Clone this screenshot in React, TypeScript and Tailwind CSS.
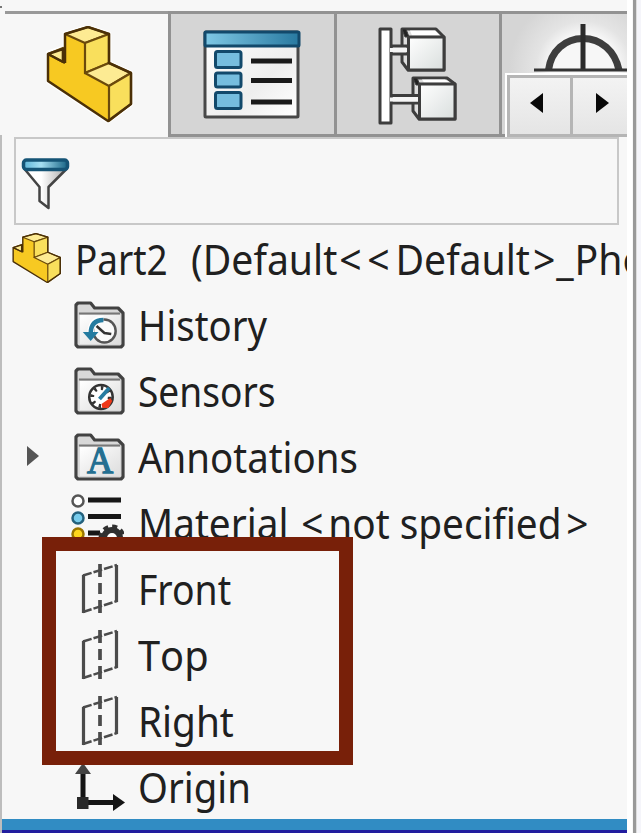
import type { ReactNode } from "react";

function PartIcon({ className }: { className: string }) {
  return (
    <svg viewBox="0 0 88 98" preserveAspectRatio="none" className={className} strokeLinejoin="round" strokeWidth="2.2" stroke="#6b4a0c">
      <path d="M2 27L15 23L19 35V8L42 1L63 8V37L85 47V78L62 95L2 55Z" fill="#f8cc24" stroke="#fff" strokeWidth="5" />
      <path d="M2 28L19 37V8L39 17V47L63 60V95L2 55Z" fill="#f7c922" stroke="none" />
      <path d="M2 28L17 22V36Z" fill="#fdeb93" />
      <path d="M19 8L42 1L63 8L39 17Z" fill="#fdeb93" />
      <path d="M39 17L63 8V37L39 47Z" fill="#f9df5c" />
      <path d="M39 47L63 37L85 47L63 60Z" fill="#fdeb93" />
      <path d="M63 60L85 47V78L63 95Z" fill="#f9df5c" />
      <path d="M2 28L17 23V36M19 37V8L42 1L63 8V37L85 47V78L62 95L2 55V28L19 37" fill="none" stroke="#4b3007" strokeWidth="2.5" />
    </svg>
  );
}

function PropertiesIcon() {
  return (
    <svg viewBox="0 0 98 90" className="mt-[16px] mr-[2px] h-[90px] w-[98px]">
      <defs>
        <linearGradient id="head"><stop stopColor="#7fc8e5" /><stop offset="1" stopColor="#2879a0" /></linearGradient>
        <linearGradient id="sheet" x2="1" y2="1"><stop stopColor="#fff" /><stop offset=".6" stopColor="#eee" /><stop offset="1" stopColor="#fff" /></linearGradient>
      </defs>
      <rect x="2" y="2" width="93" height="85" rx="1" fill="url(#sheet)" stroke="#484848" strokeWidth="3" />
      <rect x="2" y="2" width="94" height="14" rx="1" fill="url(#head)" stroke="#12496b" strokeWidth="3" />
      {[[21.5, 16], [43, 14], [62.5, 16]].map(([y, h]) => (
        <rect key={y} x="12.5" y={y} width="25.5" height={h} rx="2" fill="#76bdde" stroke="#12496b" strokeWidth="3" />
      ))}
      <path d="M48 31H89M48 50.500H89M48 72H89" stroke="#1a1a1a" strokeWidth="5" />
    </svg>
  );
}

function ConfigurationsIcon() {
  return (
    <svg viewBox="0 0 80 98" className="mt-[13px] h-[98px] w-[80px]" stroke="#3d3d3d" strokeWidth="3" strokeLinejoin="round">
      <defs><linearGradient id="cube" x2="1" y2="1"><stop stopColor="#fff" /><stop offset="1" stopColor="#d9dedd" /></linearGradient></defs>
      <path d="M24 2H58L66 10V43H30L24 35Z" fill="#dedede" />
      <path d="M32 3.500H57L62 8.500H34Z" fill="#fff" stroke="none" />
      <path d="M24 2H28L31 10H27Z" fill="#222" strokeWidth="1" />
      <path d="M35 51H69L77 57V92H41L35 84Z" fill="#dedede" />
      <path d="M44 52.500H67L72 55.500H46Z" fill="#fff" stroke="none" />
      <path d="M35 51H39L42 58H38Z" fill="#222" strokeWidth="1" />
      <path d="M13 19H30V27H13ZM13 68.500H42V76H13Z" fill="#f5f5f5" />
      <rect x="2" y="2" width="11" height="94" fill="#fff" />
      <rect x="30.500" y="10" width="35.500" height="33" fill="url(#cube)" />
      <rect x="41.500" y="57" width="35.500" height="35" fill="url(#cube)" />
      <path d="M12 23H29M12 72.500H40" stroke="#f5f5f5" strokeWidth="4" />
    </svg>
  );
}

function TargetIcon() {
  return (
    <svg viewBox="0 0 95 50" className="mt-[9px] ml-[31px] h-[50px] w-[95px] shrink-0" fill="none" stroke="#3e3e3e">
      <path d="M15.500 47C18 28 32 15.500 50 15.500S82 28 86 47" fill="#f7f7f7" strokeWidth="7" />
      <path d="M50 1V47" stroke="#2b2b2b" strokeWidth="5" />
      <path d="M1 47H95" stroke="#333" strokeWidth="3" />
    </svg>
  );
}

function FilterIcon() {
  return (
    <svg viewBox="0 0 48 52" className="mt-[19px] ml-[5px] h-[52px] w-[49px]">
      <defs>
        <linearGradient id="rim"><stop stopColor="#5eb5d8" /><stop offset=".4" stopColor="#a7e0f3" /><stop offset="1" stopColor="#176485" /></linearGradient>
        <linearGradient id="cone"><stop offset=".4" stopColor="#fff" /><stop offset="1" stopColor="#aaa" /></linearGradient>
      </defs>
      <path d="M3 11L18 29V43L27 50V29L45 11Z" fill="url(#cone)" stroke="#444" strokeWidth="2.500" strokeLinejoin="round" />
      <rect x="2" y="2" width="44" height="9.500" rx="3" fill="url(#rim)" stroke="#155476" strokeWidth="3.500" />
    </svg>
  );
}

function Folder({ children }: { children: ReactNode }) {
  return (
    <svg viewBox="0 0 52 48" preserveAspectRatio="none" className="h-[48px] w-[51px]">
      <defs><linearGradient id="paper" x2="1" y2="1"><stop stopColor="#fff" /><stop offset="1" stopColor="#ddd" /></linearGradient></defs>
      <path d="M2 4L4 2H17L21 7H45L50 12V44L48 46H4L2 44Z" fill="#d8d8d8" stroke="#424242" strokeWidth="3.200" strokeLinejoin="round" />
      <path d="M5 12.500H47" stroke="#777" strokeWidth="2" />
      <rect x="6" y="14" width="41" height="29" fill="url(#paper)" />
      {children}
    </svg>
  );
}

function HistoryIcon() {
  return (
    <Folder>
      <circle cx="31" cy="30" r="11.500" fill="#fafafa" stroke="#555" strokeWidth="2.500" />
      <path d="M23 25L31 32L38 33" fill="none" stroke="#333" strokeWidth="2.500" />
      <path d="M30 18C21 18 17 24 17 33" fill="none" stroke="#fff" strokeWidth="7" />
      <path d="M30 19C21 19 17 24 17 33" fill="none" stroke="#247ba0" strokeWidth="4.500" />
      <path d="M9 31H25L17 40Z" fill="#247ba0" />
    </Folder>
  );
}

function SensorsIcon() {
  return (
    <Folder>
      <circle cx="27.500" cy="30" r="12" fill="#fff" stroke="#333" strokeWidth="2.500" />
      <circle cx="27.500" cy="30" r="9" fill="none" stroke="#333" strokeWidth="4" strokeDasharray="2.500 4.500" />
      <path d="M28 37L37 31L39 34L35 41L29 41Z" fill="#ef3819" />
      <path d="M26 32L36 21" stroke="#277ca1" strokeWidth="4" />
    </Folder>
  );
}

function AnnotationsIcon() {
  return (
    <Folder>
      <text x="26.500" y="40.500" textAnchor="middle" className="font-['Liberation_Serif',serif] text-[37px]" fill="#246f91" stroke="#246f91" strokeWidth="1.300">A</text>
    </Folder>
  );
}

function MaterialIcon() {
  return (
    <svg viewBox="0 0 54 54" className="h-[54px] w-[54px]">
      <path d="M18 7H51M18 23.500H51M18 40H30" stroke="#171717" strokeWidth="5" />
      <circle cx="8" cy="8" r="5.500" fill="#fff" stroke="#555" strokeWidth="2.500" />
      <circle cx="8" cy="25" r="5.500" fill="#77ccec" stroke="#24617d" strokeWidth="2.500" />
      <circle cx="8" cy="41" r="5.500" fill="#ffd51c" stroke="#9a7600" strokeWidth="2.500" />
      <circle cx="42" cy="45" r="8" fill="#fff" stroke="#303030" strokeWidth="6" />
      <circle cx="42" cy="45" r="11.500" fill="none" stroke="#303030" strokeWidth="4" strokeDasharray="5 4" />
    </svg>
  );
}

function PlaneIcon() {
  return (
    <svg viewBox="0 0 38 52" className="ml-[5px] h-[52px] w-[38px]" fill="none" stroke="#4b4b4b" strokeWidth="3.200">
      <path d="M2.500 12V50M35.500 2V39" />
      <path d="M2 12.500L36 2M2 49L36 38" strokeWidth="2.500" strokeDasharray="9 2" />
      <path d="M19 1V14M19 20V31M19 37V50" strokeWidth="3.700" />
    </svg>
  );
}

function OriginIcon() {
  return (
    <svg viewBox="0 0 50 50" className="h-[50px] w-[50px]">
      <path d="M8 39.500V10M8 39.500H40" stroke="#151515" strokeWidth="5" />
      <path d="M0 11L8 0L16 11Z" fill="#444" />
      <path d="M38 31L50 39.500L38 48Z" fill="#151515" />
      <rect x="2" y="34" width="11.500" height="12" fill="#292929" />
    </svg>
  );
}

type Row = { name: string; text?: ReactNode; icon: ReactNode; iconBox: string; label: string; expandable?: boolean };

const rows: Row[] = [
  { name: "History", icon: <HistoryIcon />, iconBox: "pl-[72px] pt-[10px]", label: "scale-x-[0.935]" },
  { name: "Sensors", icon: <SensorsIcon />, iconBox: "pl-[72px] pt-[10px]", label: "scale-x-[0.905]" },
  { name: "Annotations", icon: <AnnotationsIcon />, iconBox: "pl-[72px] pt-[10px]", label: "scale-x-[0.937]", expandable: true },
  {
    name: "Material",
    text: <>Material <span className="ml-[3px] tracking-[5px]">&lt;</span>not specified<span className="ml-[5px]">&gt;</span></>,
    icon: <MaterialIcon />,
    iconBox: "pl-[68px] pt-[4px]",
    label: "scale-x-[0.945]",
  },
  { name: "Front", icon: <PlaneIcon />, iconBox: "pl-[74px] pt-[8px]", label: "scale-x-[0.91]" },
  { name: "Top", icon: <PlaneIcon />, iconBox: "pl-[74px] pt-[8px]", label: "scale-x-[0.97] [font-kerning:none]" },
  { name: "Right", icon: <PlaneIcon />, iconBox: "pl-[74px] pt-[8px]", label: "scale-x-[0.945]" },
  { name: "Origin", icon: <OriginIcon />, iconBox: "pl-[73px] pt-[10px]", label: "scale-x-[0.935]" },
];

export default function App() {
  return (
    <div className="relative flex h-[833px] w-[641px] overflow-hidden bg-[#f7f7f7] font-['Noto_Sans','Open_Sans',sans-serif] text-[41px] leading-[66px] text-[#202020]">
      <div className="flex h-full w-[2px] shrink-0 flex-col">
        <div className="mt-[6px] h-[2px] bg-[#777]" />
        <div className="mt-[127px] flex-1 bg-[#bdbdbd]" />
      </div>
      <div className="flex h-full w-[625px] shrink-0 flex-col overflow-hidden">
        <div className="h-[11px] shrink-0" />
        <div className="relative flex h-[126px] shrink-0">
          <div className="ml-[3px] flex w-[163px] shrink-0 justify-center border-t-[3px] border-[#999] bg-[#f7f7f7]">
            <PartIcon className="mt-[12px] ml-[6px] h-[98px] w-[88px]" />
          </div>
          <div className="flex w-[166px] shrink-0 justify-center border-y-[3px] border-l-[3px] border-[#929292] bg-[#d5d5d5]"><PropertiesIcon /></div>
          <div className="flex w-[165px] shrink-0 justify-center border-y-[3px] border-l-[3px] border-[#929292] bg-[#d5d5d5]"><ConfigurationsIcon /></div>
          <div className="flex w-[128px] shrink-0 border-y-[3px] border-l-[3px] border-[#929292] bg-[#d5d5d5] bg-[radial-gradient(circle_at_82px_55px,#f8f8f8_34px,#e4e4e4_48px,#d5d5d5_75px)]"><TargetIcon /></div>
          <div className="absolute right-0 bottom-0 flex h-[64px] w-[122px] border-t-2 border-l-2 border-white">
            <div className="flex w-[63px] items-center justify-center border-[3px] border-r-0 border-[#b5b5b5] bg-gradient-to-b from-[#f3f3f3] to-[#e5e5e5]">
              <svg viewBox="0 0 13 20" className="mr-[7px] mb-[6px] h-[20px] w-[13px]"><path d="M13 0V20L0 10Z" fill="#080808" /></svg>
            </div>
            <div className="flex flex-1 items-center justify-center border-y-[3px] border-l-[3px] border-[#b5b5b5] bg-gradient-to-b from-[#f3f3f3] to-[#e5e5e5]">
              <svg viewBox="0 0 13 20" className="mb-[6px] ml-[4px] h-[20px] w-[13px]"><path d="M0 0V20L13 10Z" fill="#080808" /></svg>
            </div>
          </div>
        </div>
        <div className="ml-[12px] h-[88px] w-[605px] shrink-0 border-2 border-[#c8c8c8]"><FilterIcon /></div>
        <div className="flex h-[66px] shrink-0">
          <div className="w-[73px] shrink-0 pt-[8px] pl-[10px]"><PartIcon className="h-[51px] w-[50px]" /></div>
          <div className="mt-px w-[116px] shrink-0 origin-left scale-x-[0.9]">Part2</div>
          <div className="mt-px origin-left scale-x-[0.955] whitespace-pre">
            (Default<span className="ml-[2px] tracking-[6px]">&lt;&lt;</span>Default<span className="ml-[3px] tracking-[1px]">&gt;_</span>Pho
          </div>
        </div>
        {rows.map((row) => (
          <div key={row.name} className="flex h-[66px] shrink-0">
            <div className="flex w-[136px] shrink-0">
              {row.expandable && (
                <svg viewBox="0 0 12 20" className="mt-[23px] -mr-[37px] ml-[25px] h-[20px] w-[12px] shrink-0"><path d="M0 0L12 10L0 20Z" fill="#555" /></svg>
              )}
              <div className={`shrink-0 ${row.iconBox}`}>{row.icon}</div>
            </div>
            <div className={`mt-px origin-left whitespace-pre ${row.label}`}>{row.text ?? row.name}</div>
          </div>
        ))}
        <div className="h-[14px] shrink-0 border-b-[3px] border-[#211d9e] bg-[#318cc3]" />
      </div>
      <div className="mr-[1px] w-[5px] shrink-0 bg-white" />
      <div className="w-[3px] shrink-0 bg-[#999]" />
      <div className="flex-1 border-l border-[#ddd] bg-[#f5f5fa]" />
      <div className="absolute top-[537px] left-[42px] h-[228px] w-[311px] border-[14px] border-[#782009]" />
    </div>
  );
}
